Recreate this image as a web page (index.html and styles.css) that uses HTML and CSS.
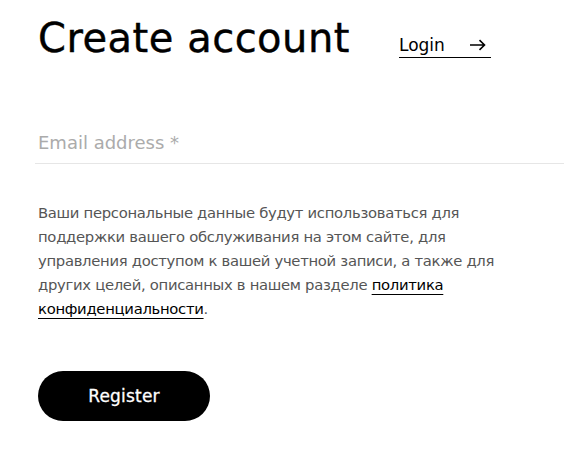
FILE: index.html
```html
<!DOCTYPE html>
<html lang="ru">
<head>
<meta charset="utf-8">
<title>Create account</title>
<link rel="stylesheet" href="styles.css">
</head>
<body>
<main class="page">
  <div class="head">
    <h1 class="title">Create account</h1>
    <a class="login" href="#">Login <svg class="arrow" width="17" height="12" viewBox="0 0 17 12" aria-hidden="true"><path d="M1 6H15.5M10.5 1.2L15.5 6L10.5 10.8" fill="none" stroke="#000" stroke-width="1.6"/></svg></a>
  </div>
  <form class="form">
    <input class="field" type="email" placeholder="Email address *">
    <p class="note">Ваши персональные данные будут использоваться для поддержки вашего обслуживания на этом сайте, для управления доступом к вашей учетной записи, а также для других целей, описанных в нашем разделе <a class="policy" href="#">политика конфиденциальности</a>.</p>
    <button class="btn" type="button">Register</button>
  </form>
</main>
</body>
</html>
```
FILE: styles.css
```css
html, body { margin: 0; background: #fff; }
body { font-family: "DejaVu Sans", sans-serif; color: #000; }
.page { padding: 12px 0 0 38px; overflow: hidden; }
.head { display: flex; align-items: baseline; gap: 49px; }
.title { margin: 0; font-size: 40px; font-weight: 500; line-height: 52px; letter-spacing: 0.5px; -webkit-text-stroke: 0.4px #000; }
.login { color: #000; text-decoration: none; font-size: 17px; line-height: 20px; border-bottom: 1px solid #000; padding-bottom: 2px; display: flex; align-items: center; gap: 24px; width: 92px; position: relative; top: -1px; }
.arrow { display: block; }
.form { margin-top: 60px; display: flex; flex-direction: column; align-items: flex-start; }
.field { box-sizing: border-box; border: 0; border-bottom: 1px solid #e6e6e6; padding: 8px 0 10px 3px; font: inherit; font-size: 18px; outline: none; margin-left: -3px; width: calc(100% + 3px); }
.field::placeholder { color: #ababab; }
.note { margin: 37px 0 0; font-size: 14.8px; letter-spacing: -0.3px; line-height: 24px; color: #555; max-width: 500px; }
.policy { color: #000; text-decoration: underline; text-decoration-thickness: 1px; text-underline-offset: 4px; }
.btn { margin-top: 50px; width: 172px; height: 50px; border: 0; border-radius: 25px; background: #000; color: #fff; font: inherit; font-size: 17px; font-weight: 500; letter-spacing: 0.2px; -webkit-text-stroke: 0.3px #fff; }
```
